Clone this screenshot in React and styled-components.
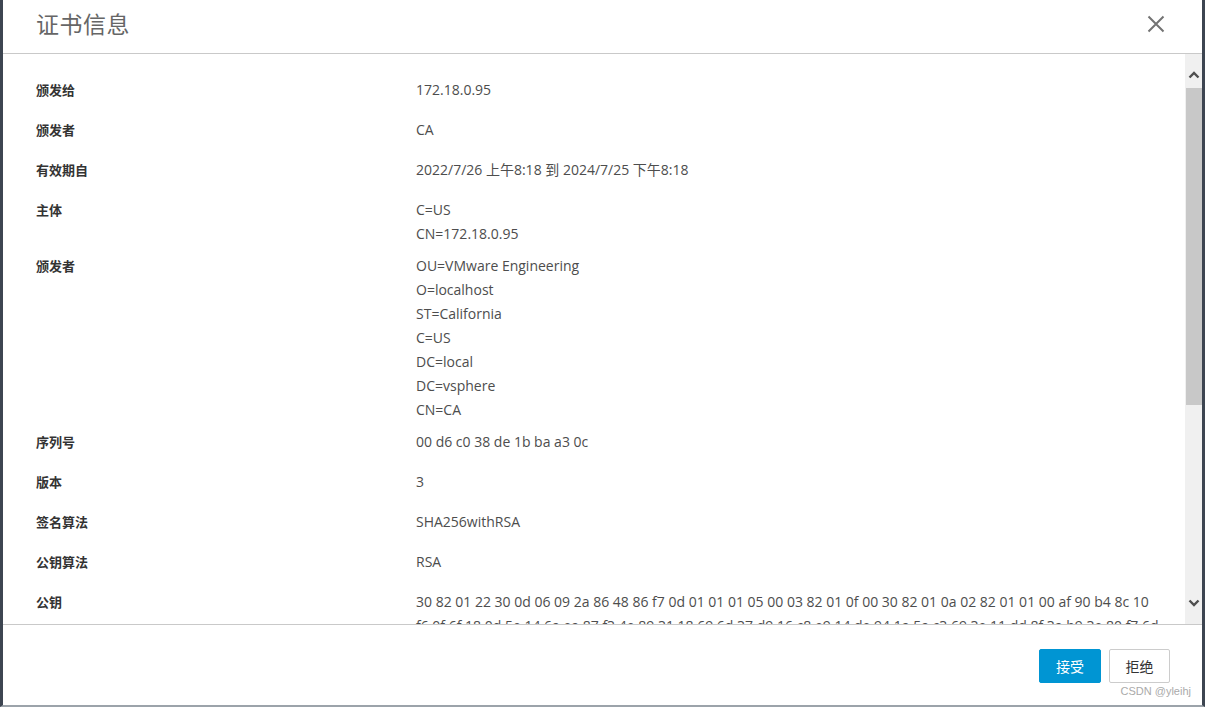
import styled, { createGlobalStyle } from "styled-components"

const GlobalStyle = createGlobalStyle`
    html, body {
        margin: 0;
        padding: 0;
        background: #ffffff;
    }
    body {
        font-family: "Open Sans", "Noto Sans CJK SC", sans-serif;
    }
`

const publicKey = [
    "30 82 01 22 30 0d 06 09 2a 86 48 86 f7 0d 01 01 01 05 00 03 82 01 0f 00 30 82 01 0a 02 82 01 01 00 af 90 b4 8c 10",
    "f6 0f 6f 18 0d 5e 14 6a ea 87 f3 4e 89 31 18 69 6d 37 d9 16 c8 e9 14 de 94 1a 5a c3 69 3e 11 dd 8f 3a b9 3e 80 f7 6d",
    "a1 5e 92 0c 33 47 b8 61 ce 2d 70 5b 08 94 e3 1f 6a 7c 22 b5 91 3d 4e 06 af 18 c7 52 e0 9b 3f 64 d1 28 7a 05 bc",
]

const rows = [
    { label: "颁发给", lines: ["172.18.0.95"] },
    { label: "颁发者", lines: ["CA"] },
    { label: "有效期自", lines: ["2022/7/26 上午8:18 到 2024/7/25 下午8:18"] },
    { label: "主体", lines: ["C=US", "CN=172.18.0.95"] },
    {
        label: "颁发者",
        lines: ["OU=VMware Engineering", "O=localhost", "ST=California", "C=US", "DC=local", "DC=vsphere", "CN=CA"],
    },
    { label: "序列号", lines: ["00 d6 c0 38 de 1b ba a3 0c"] },
    { label: "版本", lines: ["3"] },
    { label: "签名算法", lines: ["SHA256withRSA"] },
    { label: "公钥算法", lines: ["RSA"] },
    { label: "公钥", lines: publicKey },
]

function Chevron({ down }) {
    return (
        <svg width="12" height="8" viewBox="0 0 12 8">
            <path
                d={down ? "M1.5 1.5 L6 6 L10.5 1.5" : "M1.5 6.5 L6 2 L10.5 6.5"}
                fill="none"
                stroke="#4f4f4f"
                strokeWidth="2.4"
            />
        </svg>
    )
}

export default function App() {
    return (
        <>
            <GlobalStyle />
            <Modal>
                <Cabecalho>
                    <Titulo>证书信息</Titulo>
                    <Fechar aria-label="close">
                        <svg width="18" height="18" viewBox="0 0 18 18">
                            <path d="M1.5 1.5 L16.5 16.5 M16.5 1.5 L1.5 16.5" stroke="#737373" strokeWidth="2" />
                        </svg>
                    </Fechar>
                </Cabecalho>
                <Corpo>
                    <Conteudo>
                        {rows.map((row, i) => (
                            <Linha key={i}>
                                <Rotulo>{row.label}</Rotulo>
                                <Valor>
                                    {row.lines.map((l, j) => (
                                        <div key={j}>{l}</div>
                                    ))}
                                </Valor>
                            </Linha>
                        ))}
                    </Conteudo>
                    <Rolagem>
                        <Seta top>
                            <Chevron />
                        </Seta>
                        <Polegar />
                        <Espaco />
                        <Seta>
                            <Chevron down />
                        </Seta>
                    </Rolagem>
                </Corpo>
                <Rodape>
                    <Botao primario>接受</Botao>
                    <Botao>拒绝</Botao>
                    <MarcaDagua>CSDN @yleihj</MarcaDagua>
                </Rodape>
            </Modal>
        </>
    )
}

const Modal = styled.div`
    position: relative;
    width: 1205px;
    height: 707px;
    box-sizing: border-box;
    border-left: 3px solid #3d4551;
    border-right: 3px solid #3d4551;
    border-bottom: 2px solid #9ca3aa;
    display: flex;
    flex-direction: column;
    background: #ffffff;
    overflow: hidden;
`
const Cabecalho = styled.div`
    height: 54px;
    box-sizing: border-box;
    flex-shrink: 0;
    border-bottom: 1px solid #c9c9c9;
    display: flex;
    justify-content: space-between;
    align-items: flex-start;
    padding: 8px 37px 0 33px;
`
const Titulo = styled.div`
    font-family: "Noto Sans CJK SC", sans-serif;
    font-size: 23px;
    line-height: 30px;
    font-weight: 400;
    color: #666666;
    letter-spacing: 0.5px;
`
const Fechar = styled.div`
    width: 18px;
    height: 18px;
    margin-top: 7px;
    display: flex;
`
const Corpo = styled.div`
    height: 570px;
    flex-shrink: 0;
    display: flex;
    overflow: hidden;
`
const Conteudo = styled.div`
    flex: 1;
    padding: 24px 0 0 33px;
    overflow: hidden;
`
const Linha = styled.div`
    display: grid;
    grid-template-columns: 380px 1fr;
    min-height: 32px;
    margin-bottom: 8px;
`
const Rotulo = styled.div`
    font-family: "Noto Sans CJK SC", sans-serif;
    font-size: 13px;
    font-weight: 700;
    line-height: 24px;
    color: #333333;
`
const Valor = styled.div`
    font-family: "Open Sans", "Noto Sans CJK SC", sans-serif;
    font-size: 14px;
    line-height: 24px;
    color: #4d4d4d;
    white-space: nowrap;
`
const Rolagem = styled.div`
    width: 17px;
    background: #f0f0f0;
    display: flex;
    flex-direction: column;
    align-items: center;
`
const Seta = styled.div`
    height: 34px;
    width: 100%;
    display: flex;
    justify-content: center;
    align-items: ${(p) => (p.top ? "flex-start" : "flex-end")};
    padding: ${(p) => (p.top ? "17px 0 0" : "0 0 17px")};
    box-sizing: border-box;
`
const Polegar = styled.div`
    width: 16px;
    height: 317px;
    background: #c8c8c8;
`
const Espaco = styled.div`
    flex: 1;
`
const Rodape = styled.div`
    flex: 1;
    border-top: 1px solid #c9c9c9;
    display: flex;
    justify-content: flex-end;
    align-items: flex-start;
    gap: 8px;
    padding: 24px 32px 0 0;
`
const Botao = styled.button`
    height: 34px;
    width: ${(p) => (p.primario ? "62px" : "61px")};
    border-radius: 2px;
    border: 1px solid ${(p) => (p.primario ? "#0095d3" : "#cccccc")};
    background: ${(p) => (p.primario ? "#0095d3" : "#ffffff")};
    color: ${(p) => (p.primario ? "#ffffff" : "#333333")};
    font-family: "Noto Sans CJK SC", sans-serif;
    font-size: 14px;
    padding: 0;
    cursor: pointer;
`
const MarcaDagua = styled.div`
    position: absolute;
    right: 11px;
    bottom: 8px;
    font-family: "Liberation Sans", Arial, sans-serif;
    font-size: 11px;
    line-height: 12px;
    color: #aaaaaa;
`
